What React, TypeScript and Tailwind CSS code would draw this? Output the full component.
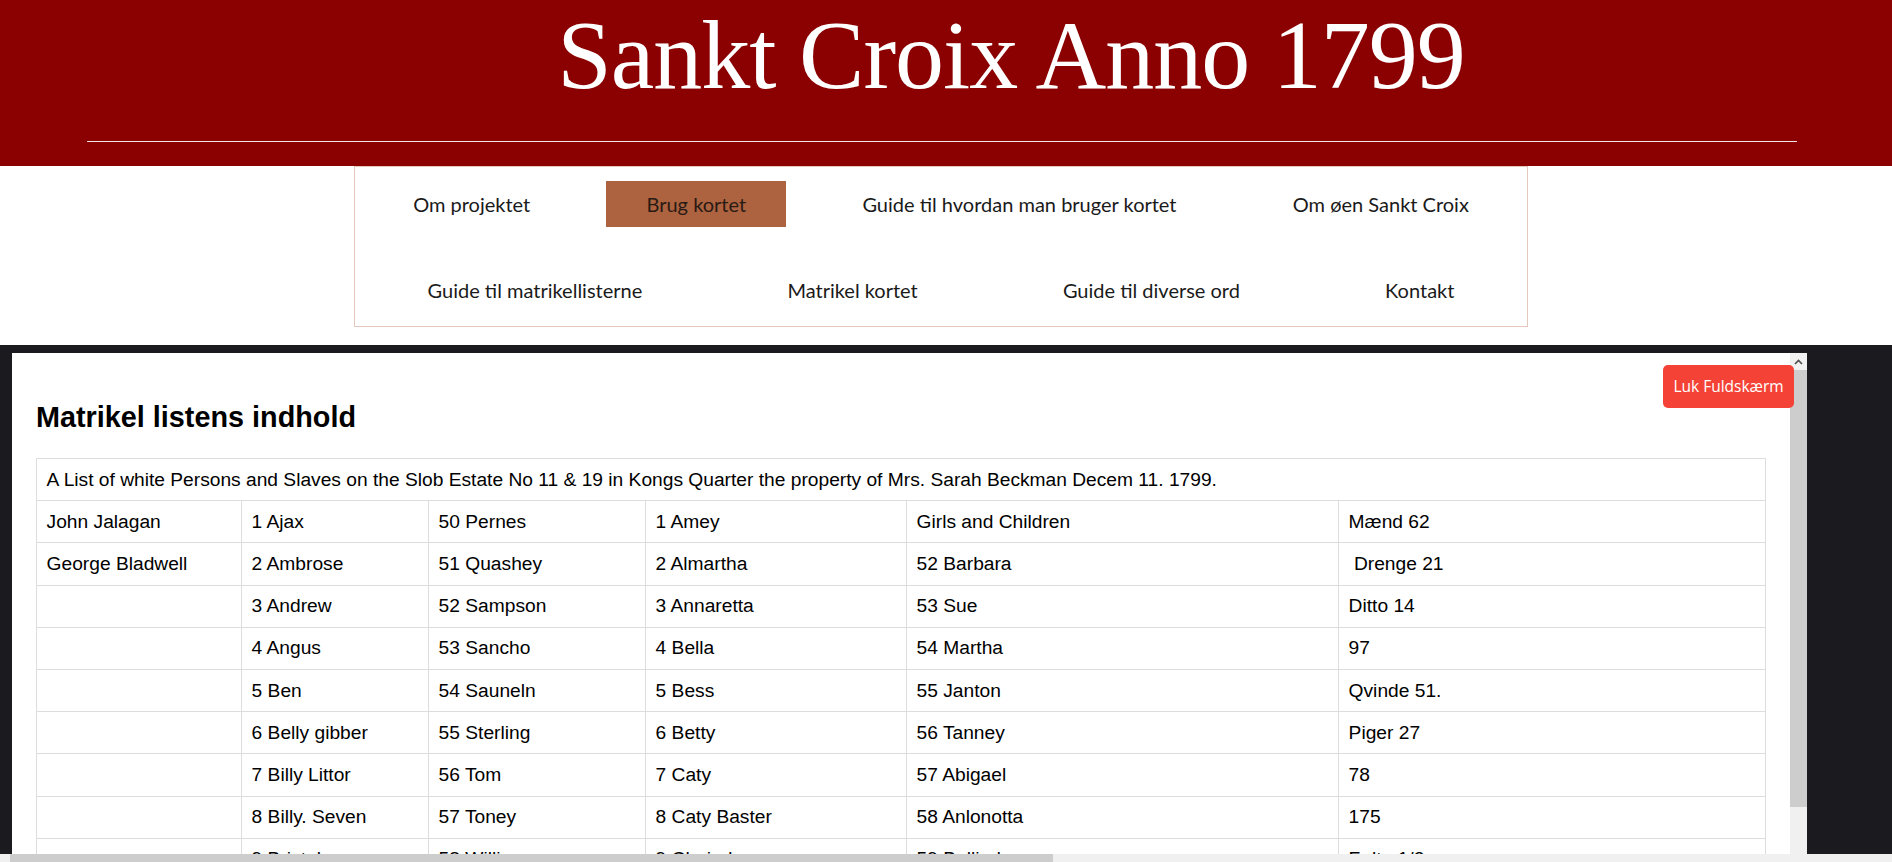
import React from "react";

const rows: string[][] = [
  ["John Jalagan", "1 Ajax", "50 Pernes", "1 Amey", "Girls and Children", "Mænd 62"],
  ["George Bladwell", "2 Ambrose", "51 Quashey", "2 Almartha", "52 Barbara", "\u00a0Drenge 21"],
  ["", "3 Andrew", "52 Sampson", "3 Annaretta", "53 Sue", "Ditto 14"],
  ["", "4 Angus", "53 Sancho", "4 Bella", "54 Martha", "97"],
  ["", "5 Ben", "54 Sauneln", "5 Bess", "55 Janton", "Qvinde 51."],
  ["", "6 Belly gibber", "55 Sterling", "6 Betty", "56 Tanney", "Piger 27"],
  ["", "7 Billy Littor", "56 Tom", "7 Caty", "57 Abigael", "78"],
  ["", "8 Billy. Seven", "57 Toney", "8 Caty Baster", "58 Anlonotta", "175"],
  ["", "9 Bristol", "58 William", "9 Clarinda", "59 Bellinda", "Følte 1/2"],
];

const colWidths = [205, 187, 217, 261, 432, 427];

function NavItem({ label, active }: { label: string; active?: boolean }) {
  return (
    <div
      className={
        active
          ? "h-[46px] px-[40px] flex items-center bg-[#ad6340] text-[#2a1a14] whitespace-nowrap"
          : "h-[46px] px-[40px] flex items-center text-[#1a1a1a] whitespace-nowrap"
      }
    >
      {label}
    </div>
  );
}

export default function App() {
  return (
    <div className="relative w-[1892px] h-[862px] overflow-hidden bg-white flex flex-col">
      {/* Header */}
      <header className="h-[166px] shrink-0 bg-[#8b0000] flex flex-col">
        <h1 className="h-[104px] pt-[6px] pl-[130px] text-center text-white text-[98px] leading-[98px] font-['Liberation_Serif',serif] tracking-[-1px] whitespace-nowrap">
          Sankt Croix Anno 1799
        </h1>
        <div className="mt-[37px] ml-[87px] w-[1710px] h-px bg-[#f3e6e6]" />
      </header>

      {/* Nav */}
      <nav className="ml-[354px] w-[1174px] h-[161px] shrink-0 border border-[#e3c8bb] pt-[14px] flex flex-col gap-[40px] font-['Lato',sans-serif] text-[20px]">
        <div className="flex justify-around">
          <NavItem label="Om projektet" />
          <NavItem label="Brug kortet" active />
          <NavItem label="Guide til hvordan man bruger kortet" />
          <NavItem label="Om øen Sankt Croix" />
        </div>
        <div className="flex justify-around">
          <NavItem label="Guide til matrikellisterne" />
          <NavItem label="Matrikel kortet" />
          <NavItem label="Guide til diverse ord" />
          <NavItem label="Kontakt" />
        </div>
      </nav>

      {/* Dark fullscreen area */}
      <div className="mt-[18px] flex-1 min-h-0 bg-[#1b1a1f] pl-[12px] pt-[8px] flex">
        <div className="relative flex h-full">
          <div className="w-[1778px] h-full bg-white overflow-hidden pl-[24px] pt-[48px] font-['Liberation_Sans',Arial,sans-serif] text-black">
            <h2 className="h-[33px] leading-[33px] text-[28.8px] font-bold whitespace-nowrap">
              Matrikel listens indhold
            </h2>
            <table className="mt-[24px] w-[1729px] table-fixed border-collapse text-[19.2px] leading-[22px]">
              <colgroup>
                {colWidths.map((w, i) => (
                  <col key={i} style={{ width: w }} />
                ))}
              </colgroup>
              <tbody>
                <tr>
                  <td colSpan={6} className="border border-[#dddddd] p-[9.6px] whitespace-nowrap">
                    A List of white Persons and Slaves on the Slob Estate No 11 &amp; 19 in Kongs Quarter the property of Mrs. Sarah Beckman Decem 11. 1799.
                  </td>
                </tr>
                {rows.map((r, i) => (
                  <tr key={i}>
                    {r.map((c, j) => (
                      <td key={j} className="border border-[#dddddd] p-[9.6px] h-[42.2px] whitespace-nowrap">
                        {c}
                      </td>
                    ))}
                  </tr>
                ))}
              </tbody>
            </table>
          </div>
          {/* vertical scrollbar */}
          <div className="w-[17px] h-full flex flex-col bg-[#f0f0f0]">
            <div className="h-[17px] flex items-center justify-center bg-[#f1f1f1]">
              <svg width="9" height="6" viewBox="0 0 9 6">
                <path d="M1 5 L4.5 1.5 L8 5" stroke="#505050" strokeWidth="1.6" fill="none" />
              </svg>
            </div>
            <div className="h-[437px] bg-[#cdcdcd]" />
            <div className="flex-1" />
          </div>
          {/* close fullscreen button */}
          <button className="absolute left-[1651px] top-[12px] w-[131px] h-[43px] rounded-[5px] bg-[#f44336] text-white text-[15.5px] font-['Open_Sans',sans-serif] flex items-center justify-center">
            Luk Fuldskærm
          </button>
        </div>
      </div>

      {/* horizontal scrollbar */}
      <div className="h-[8px] shrink-0 bg-[#f0f0f0] flex">
        <div className="ml-[10px] w-[1043px] h-full bg-[#cdcdcd]" />
      </div>
    </div>
  );
}
